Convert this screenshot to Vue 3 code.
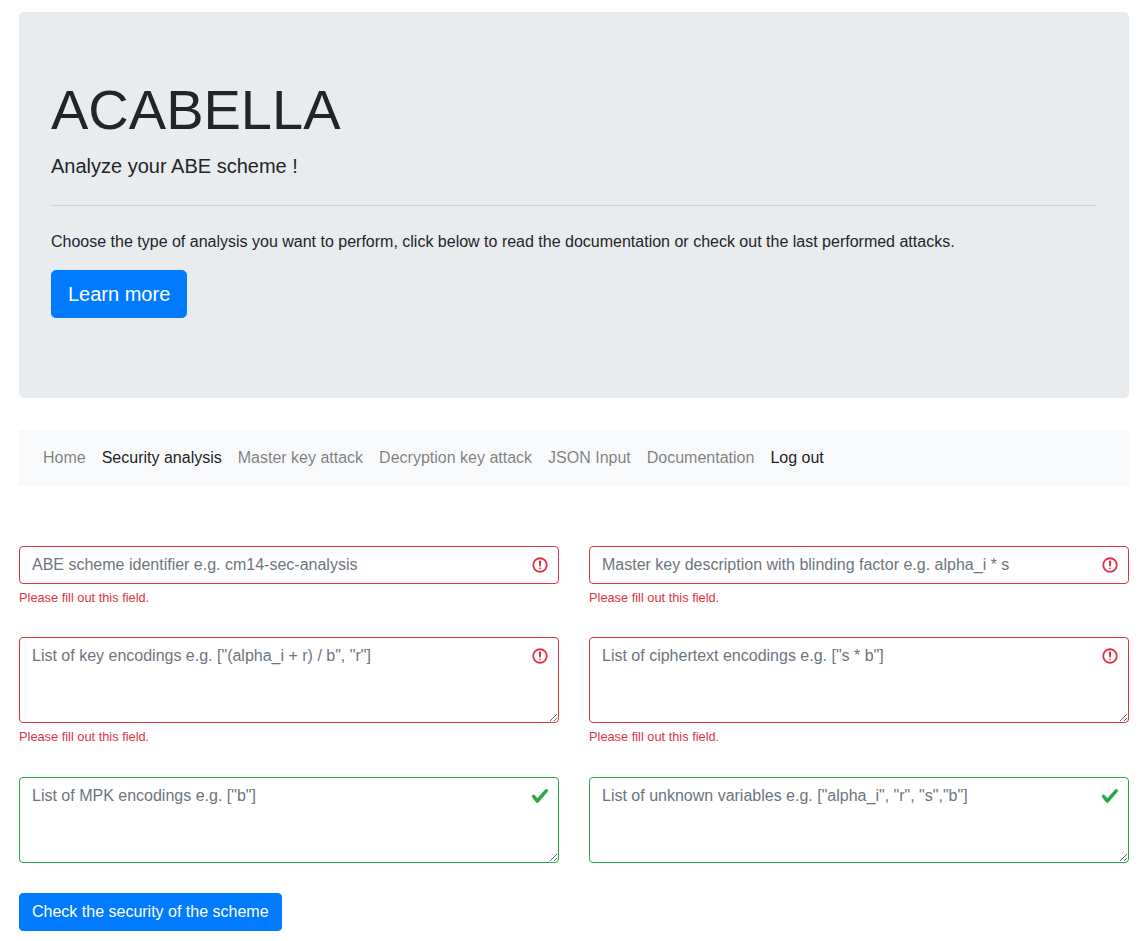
<script setup>
const navLinks = [
  { label: 'Home', active: false },
  { label: 'Security analysis', active: true },
  { label: 'Master key attack', active: false },
  { label: 'Decryption key attack', active: false },
  { label: 'JSON Input', active: false },
  { label: 'Documentation', active: false },
  { label: 'Log out', active: true },
]

const fields = [
  { kind: 'input', state: 'invalid', placeholder: 'ABE scheme identifier e.g. cm14-sec-analysis' },
  { kind: 'input', state: 'invalid', placeholder: 'Master key description with blinding factor e.g. alpha_i * s' },
  { kind: 'textarea', state: 'invalid', placeholder: 'List of key encodings e.g. ["(alpha_i + r) / b", "r"]' },
  { kind: 'textarea', state: 'invalid', placeholder: 'List of ciphertext encodings e.g. ["s * b"]' },
  { kind: 'textarea', state: 'valid', placeholder: 'List of MPK encodings e.g. ["b"]' },
  { kind: 'textarea', state: 'valid', placeholder: 'List of unknown variables e.g. ["alpha_i", "r", "s","b"]' },
]
</script>

<template>
  <div class="page">
    <header class="jumbotron">
      <h1 class="title">ACABELLA</h1>
      <p class="lead">Analyze your ABE scheme !</p>
      <hr class="rule" />
      <p class="intro">Choose the type of analysis you want to perform, click below to read the documentation or check out the last performed attacks.</p>
      <p class="action"><a class="btn-lg" href="#">Learn more</a></p>
    </header>

    <nav class="navbar">
      <a
        v-for="link in navLinks"
        :key="link.label"
        href="#"
        class="nav-link"
        :class="{ active: link.active }"
      >{{ link.label }}</a>
    </nav>

    <form class="form" @submit.prevent>
      <div class="grid">
        <div v-for="field in fields" :key="field.placeholder" class="group">
          <input
            v-if="field.kind === 'input'"
            type="text"
            class="control"
            :class="field.state"
            :placeholder="field.placeholder"
          />
          <textarea
            v-else
            rows="3"
            class="control area"
            :class="field.state"
            :placeholder="field.placeholder"
          ></textarea>
          <div v-if="field.state === 'invalid'" class="feedback">Please fill out this field.</div>
        </div>
      </div>
      <button type="submit" class="btn">Check the security of the scheme</button>
    </form>
  </div>
</template>

<style>
html, body {
  margin: 0;
  background: #fff;
}
</style>

<style scoped>
.page {
  box-sizing: border-box;
  padding: 12px 11px 0 19px;
  font-family: "Liberation Sans", Arial, sans-serif;
  font-size: 16px;
  line-height: 1.5;
  color: #212529;
}

.jumbotron {
  padding: 64px 32px;
  margin-bottom: 32px;
  background: #e9ecef;
  border-radius: 4.8px;
}

.title {
  margin: 0 0 8px;
  font-size: 56px;
  font-weight: 300;
  line-height: 1.2;
}

.lead {
  margin: 0;
  font-size: 20px;
  font-weight: 300;
}

.rule {
  margin: 24px 0;
  border: 0;
  border-top: 1px solid rgba(0, 0, 0, 0.1);
}

.intro {
  margin: 0 0 16px;
}

.action {
  margin: 0 0 16px;
}

.btn-lg {
  display: inline-block;
  padding: 8px 16px;
  border: 1px solid #007bff;
  border-radius: 4.8px;
  background: #007bff;
  color: #fff;
  font-size: 20px;
  line-height: 1.5;
  text-decoration: none;
}

.navbar {
  display: flex;
  align-items: center;
  padding: 8px 16px;
  margin-bottom: 60px;
  background: #f8f9fa;
}

.nav-link {
  padding: 8px;
  color: rgba(0, 0, 0, 0.5);
  text-decoration: none;
}

.nav-link.active {
  color: rgba(0, 0, 0, 0.9);
}

.grid {
  display: grid;
  grid-template-columns: 540px 540px;
  column-gap: 30px;
  row-gap: 30px;
}

.control {
  display: block;
  box-sizing: border-box;
  width: 100%;
  height: 38px;
  margin: 0;
  padding: 6px 36px 6px 12px;
  border: 1px solid #ced4da;
  border-radius: 4px;
  background-color: #fff;
  background-repeat: no-repeat;
  background-position: right 9px center;
  background-size: 18px 18px;
  color: #495057;
  font-family: inherit;
  font-size: 16px;
  line-height: 1.5;
  outline: none;
}

.control::placeholder {
  color: #6c757d;
  opacity: 1;
}

.area {
  height: 86px;
  resize: vertical;
  overflow: auto;
  background-position: top 9px right 9px;
}

.invalid {
  border-color: #dc3545;
  background-image: url("data:image/svg+xml,%3csvg xmlns='http://www.w3.org/2000/svg' width='12' height='12' fill='none' stroke='%23dc3545' stroke-width='1.2' viewBox='0 0 12 12'%3e%3ccircle cx='6' cy='6' r='4.5'/%3e%3cpath stroke-linejoin='round' d='M5.8 3.6h.4L6 6.5z'/%3e%3ccircle cx='6' cy='8.2' r='.6' fill='%23dc3545' stroke='none'/%3e%3c/svg%3e");
}

.valid {
  border-color: #28a745;
  background-image: url("data:image/svg+xml,%3csvg xmlns='http://www.w3.org/2000/svg' width='8' height='8' viewBox='0 0 8 8'%3e%3cpath fill='%2328a745' stroke='%2328a745' stroke-width='.2' d='M2.3 6.73L.6 4.53c-.4-1.04.46-1.4 1.1-.8l1.1 1.4 3.4-3.8c.6-.63 1.6-.27 1.2.7l-4 4.6c-.43.5-.8.4-1.1.1z'/%3e%3c/svg%3e");
}

.feedback {
  margin-top: 4px;
  color: #dc3545;
  font-size: 12.8px;
  line-height: 1.5;
}

.btn {
  display: inline-block;
  margin-top: 30px;
  padding: 6px 12px;
  border: 1px solid #007bff;
  border-radius: 4px;
  background: #007bff;
  color: #fff;
  font-family: inherit;
  font-size: 16px;
  line-height: 1.5;
}
</style>
